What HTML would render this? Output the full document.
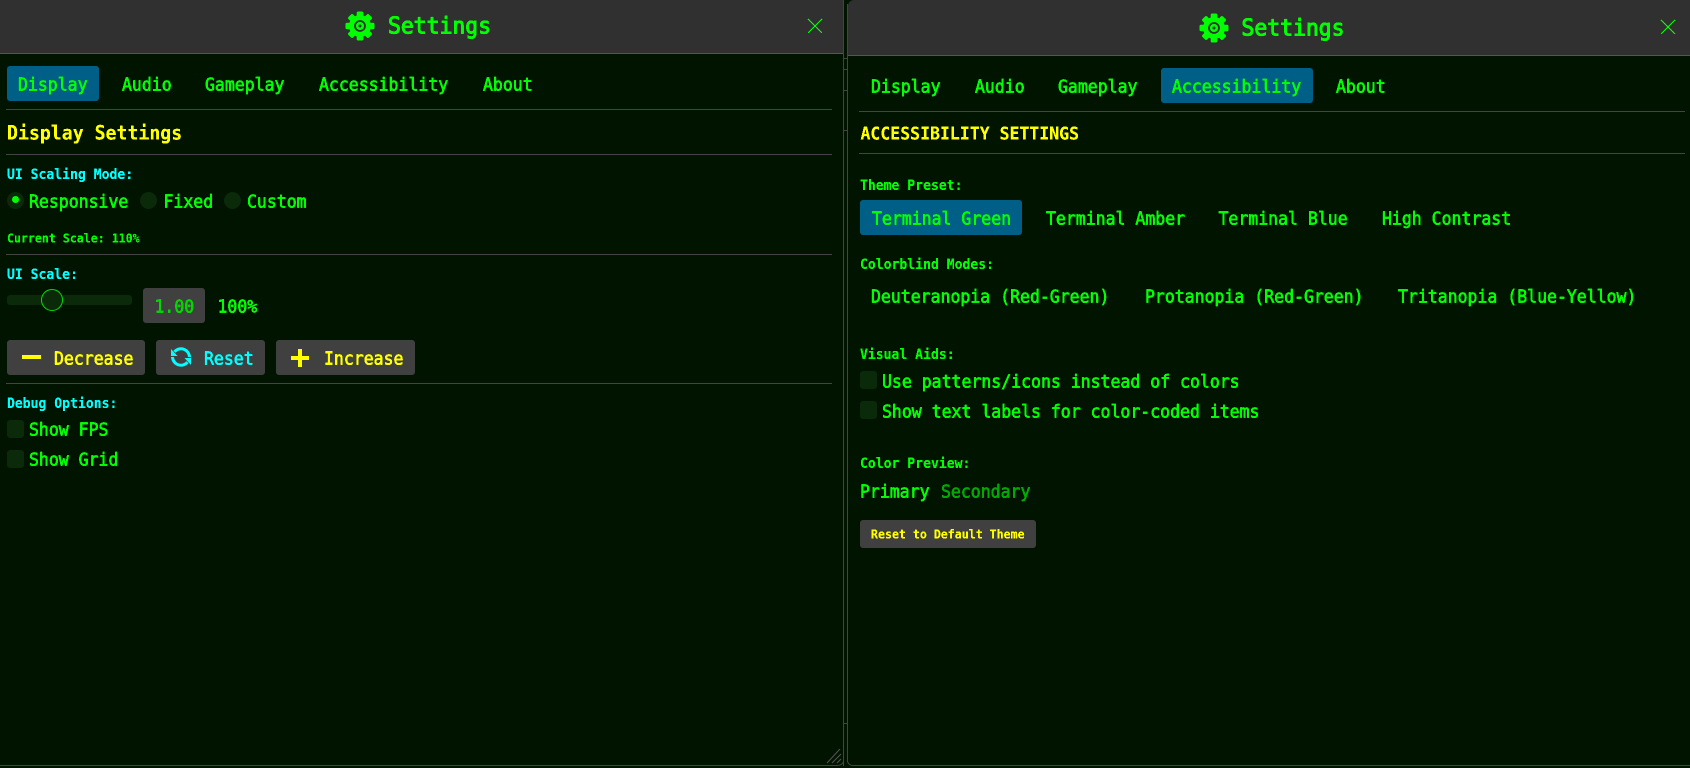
<!DOCTYPE html>
<html><head><meta charset="utf-8"><style>
html,body{margin:0;padding:0;width:1690px;height:768px;overflow:hidden;background:#001400}
body{position:relative;font-family:"DejaVu Sans Mono","Liberation Mono",monospace;color:#00ff00}
.t{position:absolute;white-space:pre;height:20px;line-height:20px;font-size:16.5px;transform:translateY(1px) scaleY(1.08);filter:url(#px);-webkit-text-stroke:.5px currentColor}
.l{font-size:13.1px;font-weight:bold;-webkit-text-stroke:0}
.c{color:#00ffff}.y{color:#ffff00}
.b{position:absolute}
.hr{position:absolute;height:1px;background:#444}
.hd{position:absolute;background:#303030;top:0;border-bottom:1px solid #555}
.tab{position:absolute;background:#005f87;border-radius:3px}
.btn{position:absolute;background:#404040;border-radius:3px}
.ck{position:absolute;background:#0a2a0a;width:17px;height:18px;border-radius:3px}
.rd{position:absolute;background:#0a2a0a;width:17px;height:17px;border-radius:50%}
.h{font-weight:bold;-webkit-text-stroke:0}
.ti{font-size:21.4px;height:22px;line-height:22px;-webkit-text-stroke:.8px currentColor}
</style></head><body>
<svg width="0" height="0" style="position:absolute"><filter id="px" color-interpolation-filters="sRGB" x="-2%" y="-10%" width="104%" height="120%"><feComponentTransfer><feFuncA type="linear" slope="2.6" intercept="-0.45"/></feComponentTransfer></filter></svg>

<!-- window frames -->
<div class="b" style="left:843px;top:0;width:1px;height:766px;background:#444"></div>
<div class="b" style="left:847px;top:4px;width:1px;height:758px;background:#444"></div>
<div class="b" style="left:0;top:765px;width:838px;height:1px;background:#444"></div>
<div class="b" style="left:853px;top:765px;width:837px;height:1px;background:#444"></div>
<div class="b" style="left:844px;top:58px;width:3px;height:1px;background:#444"></div>
<div class="b" style="left:844px;top:69px;width:3px;height:1px;background:#444"></div>
<div class="b" style="left:844px;top:90px;width:3px;height:1px;background:#444"></div>
<div class="b" style="left:844px;top:130px;width:3px;height:1px;background:#444"></div>
<div class="b" style="left:844px;top:723px;width:3px;height:1px;background:#444"></div>
<svg class="b" style="left:824px;top:745px" width="30" height="23" viewBox="0 0 30 23" fill="none" stroke="#555" stroke-width="1">
<path d="M3 18L16 4M8 18L17 9M13 18L17 14"/>
<path d="M0 20.5H13Q18 20.5 19.5 16.5M23.5 16.5Q25 20.5 29 20.5" stroke="#444"/>
</svg>

<!-- LEFT PANEL -->
<div class="hd" style="left:0;width:843px;height:53px"></div>
<svg class="b" style="left:345px;top:11px" width="30" height="30" viewBox="-15 -15 30 30">
<g fill="#00ff00"><circle r="11"/>
<rect x="-3.300" y="-14.500" width="6.600" height="29" rx="1.500"/><rect x="-3.300" y="-14.500" width="6.600" height="29" rx="1.500" transform="rotate(45)"/><rect x="-3.300" y="-14.500" width="6.600" height="29" rx="1.500" transform="rotate(90)"/><rect x="-3.300" y="-14.500" width="6.600" height="29" rx="1.500" transform="rotate(135)"/></g>
<circle r="5" fill="none" stroke="#303030" stroke-width="1.800"/><circle r="1.500" fill="#303030"/>
</svg>
<div class="t ti" style="left:388px;top:15px">Settings</div>
<svg class="b" style="left:807px;top:18px" width="16" height="16" viewBox="0 0 16 16" shape-rendering="crispEdges"><path d="M1 1L15 15M15 1L1 15" stroke="#00ff00" stroke-width="1" fill="none"/></svg>

<div class="tab" style="left:7px;top:66px;width:92px;height:35px"></div>
<div class="t" style="left:18px;top:74px">Display</div>
<div class="t" style="left:122px;top:74px">Audio</div>
<div class="t" style="left:205px;top:74px">Gameplay</div>
<div class="t" style="left:319px;top:74px">Accessibility</div>
<div class="t" style="left:483px;top:74px">About</div>
<div class="hr" style="left:6px;top:109px;width:826px"></div>
<div class="t y h" style="left:7px;top:123px;font-size:18.2px">Display Settings</div>
<div class="hr" style="left:6px;top:154px;width:826px"></div>
<div class="t l c" style="left:7px;top:165px">UI Scaling Mode:</div>
<div class="rd" style="left:7px;top:192px"></div>
<div class="b" style="left:12px;top:196px;width:7px;height:7px;border-radius:50%;background:#00ff00"></div>
<div class="t" style="left:29px;top:191px">Responsive</div>
<div class="rd" style="left:140px;top:192px"></div>
<div class="t" style="left:163.500px;top:191px">Fixed</div>
<div class="rd" style="left:224px;top:192px"></div>
<div class="t" style="left:247px;top:191px">Custom</div>
<div class="t l" style="left:7px;top:227px;font-size:11.6px">Current Scale: 110%</div>
<div class="hr" style="left:6px;top:254px;width:826px"></div>
<div class="t l c" style="left:7px;top:265px">UI Scale:</div>
<div class="b" style="left:7px;top:295px;width:125px;height:10px;background:#0a2a0a;border-radius:3px"></div>
<div class="b" style="left:41px;top:289px;width:20px;height:20px;border:1px solid #00e000;border-radius:50%;background:#0a2a0a"></div>
<div class="btn" style="left:143px;top:288px;width:62px;height:35px"></div>
<div class="t" style="left:154.500px;top:296px;color:#00d800">1.00</div>
<div class="t" style="left:217.500px;top:296px">100%</div>

<div class="btn" style="left:7px;top:340px;width:138px;height:35px"></div>
<div class="b" style="left:22px;top:355px;width:19px;height:4px;background:#ffff00"></div>
<div class="t y" style="left:54px;top:348px">Decrease</div>
<div class="btn" style="left:156px;top:340px;width:109px;height:35px"></div>
<svg class="b" style="left:170px;top:346px" width="22" height="22" viewBox="0 0 22 22" fill="none" stroke="#00ffff" stroke-width="3">
<path d="M19.500 11A8.500 8.500 0 0 0 4.500 5.800"/><path d="M2.500 11A8.500 8.500 0 0 0 17.500 16.200"/>
<path d="M1 3L7.500 10H1Z" fill="#00ffff" stroke="none"/><path d="M21 19L14.500 12H21Z" fill="#00ffff" stroke="none"/>
</svg>
<div class="t c" style="left:204px;top:348px">Reset</div>
<div class="btn" style="left:276px;top:340px;width:139px;height:35px"></div>
<div class="b" style="left:291px;top:356px;width:18px;height:4px;background:#ffff00"></div>
<div class="b" style="left:298px;top:349px;width:4px;height:18px;background:#ffff00"></div>
<div class="t y" style="left:324px;top:348px">Increase</div>
<div class="hr" style="left:6px;top:383px;width:826px"></div>
<div class="t l c" style="left:7px;top:394px">Debug Options:</div>
<div class="ck" style="left:7px;top:420px"></div>
<div class="t" style="left:29px;top:419px">Show FPS</div>
<div class="ck" style="left:7px;top:450px"></div>
<div class="t" style="left:29px;top:449px">Show Grid</div>

<!-- RIGHT PANEL -->
<div class="hd" style="left:848px;width:842px;height:55px;border-top-left-radius:6px"></div>
<svg class="b" style="left:1199px;top:13px" width="30" height="30" viewBox="-15 -15 30 30">
<g fill="#00ff00"><circle r="11"/>
<rect x="-3.300" y="-14.500" width="6.600" height="29" rx="1.500"/><rect x="-3.300" y="-14.500" width="6.600" height="29" rx="1.500" transform="rotate(45)"/><rect x="-3.300" y="-14.500" width="6.600" height="29" rx="1.500" transform="rotate(90)"/><rect x="-3.300" y="-14.500" width="6.600" height="29" rx="1.500" transform="rotate(135)"/></g>
<circle r="5" fill="none" stroke="#303030" stroke-width="1.800"/><circle r="1.500" fill="#303030"/>
</svg>
<div class="t ti" style="left:1241.500px;top:17px">Settings</div>
<svg class="b" style="left:1660px;top:19px" width="16" height="16" viewBox="0 0 16 16" shape-rendering="crispEdges"><path d="M1 1L15 15M15 1L1 15" stroke="#00ff00" stroke-width="1" fill="none"/></svg>

<div class="tab" style="left:1161px;top:68px;width:152px;height:35px"></div>
<div class="t" style="left:871px;top:76px">Display</div>
<div class="t" style="left:975px;top:76px">Audio</div>
<div class="t" style="left:1058px;top:76px">Gameplay</div>
<div class="t" style="left:1172px;top:76px">Accessibility</div>
<div class="t" style="left:1336px;top:76px">About</div>
<div class="hr" style="left:859px;top:111px;width:826px"></div>
<div class="t y h" style="left:860.500px;top:123px">ACCESSIBILITY SETTINGS</div>
<div class="hr" style="left:859px;top:153px;width:826px"></div>
<div class="t l" style="left:860px;top:176px">Theme Preset:</div>
<div class="tab" style="left:860px;top:200px;width:162px;height:35px"></div>
<div class="t" style="left:872px;top:208px">Terminal Green</div>
<div class="t" style="left:1046px;top:208px">Terminal Amber</div>
<div class="t" style="left:1218.500px;top:208px">Terminal Blue</div>
<div class="t" style="left:1382px;top:208px">High Contrast</div>
<div class="t l" style="left:860px;top:255px">Colorblind Modes:</div>
<div class="t" style="left:871px;top:286px">Deuteranopia (Red-Green)</div>
<div class="t" style="left:1145px;top:286px">Protanopia (Red-Green)</div>
<div class="t" style="left:1398px;top:286px">Tritanopia (Blue-Yellow)</div>
<div class="t l" style="left:860px;top:345px">Visual Aids:</div>
<div class="ck" style="left:860px;top:371px"></div>
<div class="t" style="left:882px;top:371px">Use patterns/icons instead of colors</div>
<div class="ck" style="left:860px;top:401px"></div>
<div class="t" style="left:882px;top:401px">Show text labels for color-coded items</div>
<div class="t l" style="left:860px;top:454px">Color Preview:</div>
<div class="t" style="left:860px;top:481px">Primary</div>
<div class="t" style="left:941px;top:481px;color:#00aa00">Secondary</div>
<div class="btn" style="left:860px;top:520px;width:176px;height:28px"></div>
<div class="t l y" style="left:871px;top:523px;font-size:11.6px">Reset to Default Theme</div>
</body></html>
